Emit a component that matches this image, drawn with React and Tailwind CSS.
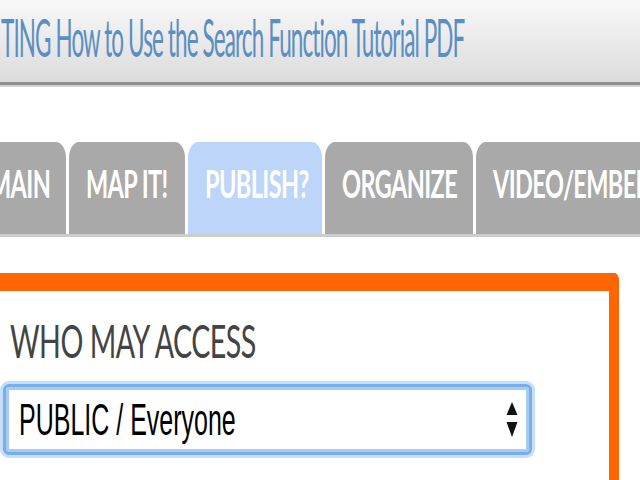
import React from 'react';

const tabs = [
  { label: 'MAIN', w: 'w-[94px]', active: false },
  { label: 'MAP IT!', w: 'w-[116px]', active: false },
  { label: 'PUBLISH?', w: 'w-[134px]', active: true },
  { label: 'ORGANIZE', w: 'w-[148px]', active: false },
  { label: 'VIDEO/EMBED', w: 'w-[190px]', active: false },
];

const SelectArrows = () => (
  <svg width="12" height="36" viewBox="0 0 12 36" className="shrink-0">
    <path d="M6 0 L11.5 13 L0.5 13 Z" fill="#111" />
    <path d="M0.5 20 L11.5 20 L6 35 Z" fill="#111" />
  </svg>
);

const App = () => {
  return (
    <div className="w-[640px] h-[480px] overflow-hidden bg-white font-['Lato',sans-serif]">
      {/* HEADER */}
      <header className="h-[85px] bg-gradient-to-b from-[#f8f8f8] to-[#dcdcdc] border-b-[3px] border-[#8f8f8f] shadow-[0_2px_0_#d0d0d0] pt-[28px] pl-[1px]">
        <span className="inline-block origin-left scale-y-[2.3] text-[22.5px] leading-none tracking-[-0.9px] text-[#5b8fc3] whitespace-nowrap">
          TING How to Use the Search Function Tutorial PDF
        </span>
      </header>

      {/* TABS */}
      <nav className="mt-[57px] flex gap-[3px] -ml-[28px] border-b-[3px] border-[#cccccc]">
        {tabs.map((t) => (
          <div
            key={t.label}
            className={`${t.w} shrink-0 h-[92px] rounded-t-[10px_16px] pt-[31px] pl-[17px] whitespace-nowrap ${t.active ? 'bg-[#bcd5f9]' : 'bg-[#a9a9a9]'}`}
          >
            <span className="inline-block scale-y-[1.6] text-[23.5px] leading-none font-bold tracking-[-0.6px] text-white">
              {t.label}
            </span>
          </div>
        ))}
      </nav>

      {/* PUBLISH PANEL */}
      <section className="mt-[36px] -ml-[20px] w-[639px] h-[220px] border-t-[18px] border-r-[10px] border-l-[10px] border-[#ff6600] rounded-tr-[5px_8px] pl-[10px]">
        <div className="mt-[36px] pl-[10px]">
          <span className="inline-block scale-y-[1.6] text-[28.6px] leading-none tracking-[-0.5px] text-[#444444] whitespace-nowrap">
            WHO MAY ACCESS
          </span>
        </div>
        <div className="mt-[26px] ml-[3px] w-[529px] h-[71px] rounded-[6px] border-[3px] border-[#78aeea] shadow-[0_0_0_3px_#c6def8,inset_0_0_0_3px_#a8cbf2] bg-white flex items-center justify-between pl-[13px] pr-[11px]">
          <span className="inline-block scale-y-[1.8] text-[25px] leading-none text-black font-['Liberation_Sans',sans-serif] whitespace-nowrap">
            PUBLIC / Everyone
          </span>
          <SelectArrows />
        </div>
      </section>
    </div>
  );
};

export default App;
